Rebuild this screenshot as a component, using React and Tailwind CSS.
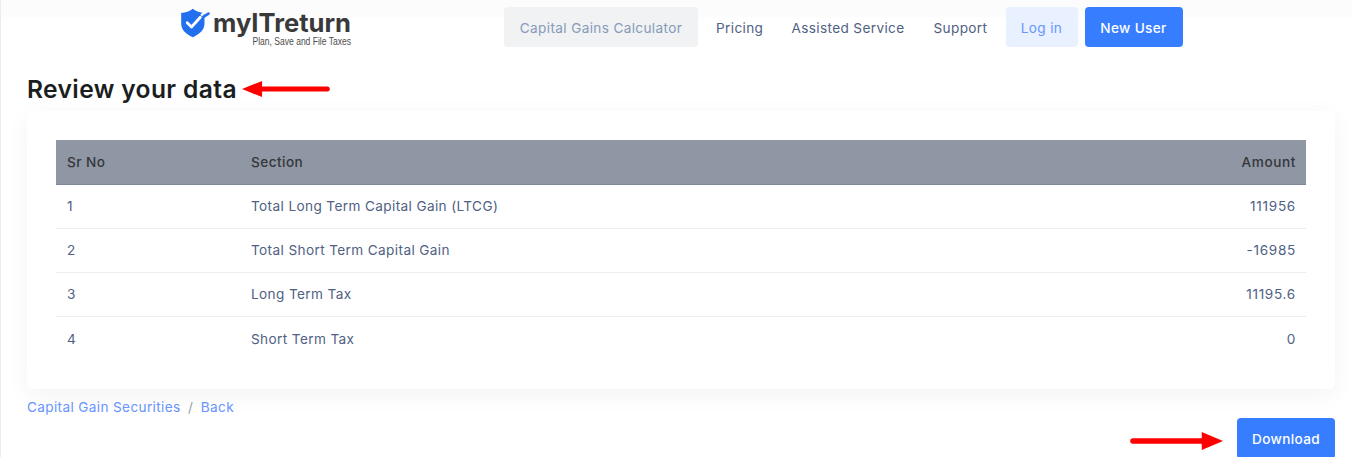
const navLinks = [
    { label: "Pricing", className: "w-[46px]" },
    { label: "Assisted Service", className: "ml-[29.5px] w-[113px]" },
    { label: "Support", className: "ml-[29px] w-[55px]" },
];

const rows = [
    { id: 1, section: "Total Long Term Capital Gain (LTCG)", amount: "111956" },
    { id: 2, section: "Total Short Term Capital Gain", amount: "-16985" },
    { id: 3, section: "Long Term Tax", amount: "11195.6" },
    { id: 4, section: "Short Term Tax", amount: "0" },
];

function Logo() {
    return (
        <svg className="ml-[179px] mt-[7px] h-[46px] w-[180px] shrink-0 overflow-visible" viewBox="0 0 180 46">
            <path d="M12.8 1.8 C16 4.3 20 5.6 24.5 6 V16.5 C24.5 22.5 20 27 12.8 30.2 C5.6 27 1.2 22.5 1.2 16.5 V6 C5.6 5.6 9.6 4.3 12.8 1.8 Z" fill="#2270ee" />
            <path d="M7.2 15.8 L11.5 20 L20.3 10.2" fill="none" stroke="#fff" strokeWidth="2.8" strokeLinecap="round" strokeLinejoin="round" />
            <path d="M21.2 8.6 L25 4.8" fill="none" stroke="#fff" strokeWidth="2.4" />
            <path d="M23.8 9.6 L28.4 6.6" fill="none" stroke="#2270ee" strokeWidth="2.8" strokeLinecap="round" />
            <text x="33" y="24.9" textLength="138" lengthAdjust="spacingAndGlyphs" fill="#39393b" className="font-['Inter',sans-serif] text-[25.5px] font-bold tracking-normal">myITreturn</text>
            <text x="72.5" y="37.7" textLength="98.5" lengthAdjust="spacingAndGlyphs" fill="#4c4c4e" className="font-['Liberation_Sans',sans-serif] text-[10px] tracking-normal">Plan, Save and File Taxes</text>
        </svg>
    );
}

function Header() {
    return (
        <header className="flex h-[60px] items-start bg-linear-to-b from-[#fcfcfc] from-[16px] to-white to-[18px]">
            <Logo />
            <nav className="ml-[144px] mt-[7px] flex h-10 items-center whitespace-nowrap text-[#506184]">
                <a className="mr-[18px] flex h-10 w-[194px] items-center justify-center rounded bg-[#f0f2f4] pt-0.5 text-[#869ab8]">Capital Gains Calculator</a>
                {navLinks.map((link) => (
                    <a key={link.label} className={`pt-0.5 ${link.className}`}>{link.label}</a>
                ))}
                <a className="ml-[17px] flex h-10 w-[72px] items-center justify-center rounded bg-[#e9f0ff] pt-0.5 text-[#6697ff]">Log in</a>
                <a className="ml-[7px] flex h-10 w-[98px] items-center justify-center rounded bg-[#377dff] pt-0.5 font-medium text-white">New User</a>
            </nav>
        </header>
    );
}

function Arrow({ className }) {
    return (
        <svg className={className} viewBox="0 0 92 20" preserveAspectRatio="none">
            <path d="M20 10 H89" stroke="#f00" strokeWidth="5.6" strokeLinecap="round" />
            <path d="M0 10 L21 1 V19 Z" fill="#f00" />
        </svg>
    );
}

export default function App() {
    return (
        <div className="h-[457px] overflow-hidden border-l border-[#ececee] bg-white font-['Inter',sans-serif] text-[13.6px] tracking-[0.36px] text-[#506184]">
            <Header />
            <main className="pl-[26px] pr-[17px]">
                <div className="flex h-[51px] items-center pt-[7px]">
                    <h1 className="w-[215px] whitespace-nowrap text-[24.6px] font-semibold text-[#1b1e21]">Review your data</h1>
                    <Arrow className="h-[18px] w-[88px]" />
                </div>

                <section className="h-[278px] rounded-md bg-white px-[29px] pt-[29px] shadow-[0_6px_24px_rgba(22,28,45,0.05)]">
                    <table className="w-full table-fixed border-collapse">
                        <thead>
                            <tr className="h-11 border-b border-[#7c8798] bg-[#8f96a4] text-[#343639]">
                                <th className="w-[184px] px-[11px] text-left font-medium tracking-[0.45px]">Sr No</th>
                                <th className="px-[11px] text-left font-medium tracking-[0.45px]">Section</th>
                                <th className="w-[200px] px-[10px] text-right font-medium tracking-[0.6px]">Amount</th>
                            </tr>
                        </thead>
                        <tbody>
                            {rows.map((row) => (
                                <tr key={row.id} className="h-[44.25px] border-b border-[#ebedf2] last:border-b-0">
                                    <td className="px-[11px]">{row.id}</td>
                                    <td className="px-[11px] tracking-[0.38px]">{row.section}</td>
                                    <td className="px-[10px] text-right tracking-[0.7px]">{row.amount}</td>
                                </tr>
                            ))}
                        </tbody>
                    </table>
                </section>

                <div className="mt-2 flex h-5 items-center gap-[7.5px] text-[#6794ff]">
                    <a>Capital Gain Securities</a>
                    <span className="text-[#9a9fa8]">/</span>
                    <a>Back</a>
                </div>

                <div className="flex items-start justify-end">
                    <Arrow className="mr-3.5 mt-[14px] h-5 w-[93px] rotate-180" />
                    <button className="mt-px h-[41px] w-[98px] rounded bg-[#377dff] pt-px font-medium text-white">Download</button>
                </div>
            </main>
        </div>
    );
}
